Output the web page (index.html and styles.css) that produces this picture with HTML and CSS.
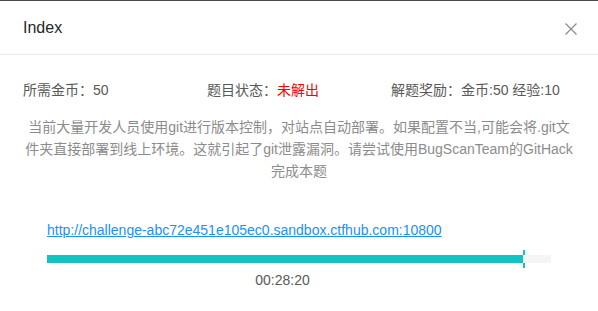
FILE: index.html
```html
<!DOCTYPE html>
<html lang="zh-CN">
<head>
    <meta charset="UTF-8">
    <meta name="viewport" content="width=device-width, initial-scale=1.0">
    <title>Index</title>
    <link rel="stylesheet" href="styles.css">
</head>
<body>
    <div class="modal">
        <!-- 标题栏 -->
        <div class="modal-header">
            <div class="modal-title">Index</div>
            <span class="modal-close">
                <svg width="12" height="12" viewBox="0 0 12 12">
                    <path d="M0.5 0.5 L11.5 11.5 M11.5 0.5 L0.5 11.5" stroke="#8c8c8c" stroke-width="1.3" fill="none"/>
                </svg>
            </span>
        </div>

        <div class="modal-body">
            <!-- 题目信息 -->
            <div class="info-row">
                <div>所需金币：50</div>
                <div>题目状态：<span class="unsolved">未解出</span></div>
                <div>解题奖励：金币:50 经验:10</div>
            </div>

            <p class="desc">当前大量开发人员使用git进行版本控制，对站点自动部署。如果配置不当,可能会将.git文件夹直接部署到线上环境。这就引起了git泄露漏洞。请尝试使用BugScanTeam的GitHack完成本题</p>

            <div class="env">
                <a class="env-link" href="#">http://challenge-abc72e451e105ec0.sandbox.ctfhub.com:10800</a>

                <div class="progress">
                    <div class="progress-fill" style="width: 94.44%"></div>
                    <div class="progress-mark" style="left: 94.44%"></div>
                </div>

                <div class="timer">00:28:20</div>
            </div>
        </div>
    </div>
</body>
</html>
```

FILE: styles.css
```css
body {
    margin: 0;
    background-color: #fff;
    font-family: "Liberation Sans", "Noto Sans CJK SC", sans-serif;
    font-size: 14px;
    line-height: 22px;
    color: #595959;
}

/* 弹窗 */
.modal {
    border-top: 1px solid #4a4a4a;
    background-color: #fff;
}

.modal-header {
    display: flex;
    align-items: center;
    justify-content: space-between;
    height: 53px;
    padding: 0 21px 0 23px;
    border-bottom: 1px solid #e8e8e8;
}

.modal-title {
    font-size: 16px;
    color: #262626;
}

.modal-close {
    display: flex;
    width: 12px;
    height: 12px;
    margin-top: 2px;
    cursor: pointer;
}

.modal-body {
    padding: 24px 23px;
}

/* 信息栏 */
.info-row {
    display: grid;
    grid-template-columns: 1fr 1fr 1fr;
    color: #595959;
}

.unsolved {
    color: #f00;
}

.desc {
    margin: 15px 0 0;
    text-align: center;
    color: #8c8c8c;
}

/* 环境地址和倒计时 */
.env {
    margin-top: 37px;
    padding: 0 24px;
}

.env-link {
    color: #1890ff;
    text-decoration: underline;
}

.progress {
    position: relative;
    height: 8px;
    margin-top: 14px;
    background-color: #f5f5f5;
}

.progress-fill {
    height: 8px;
    background-color: #13c2c2;
}

.progress-mark {
    position: absolute;
    top: -5px;
    width: 2px;
    height: 8px;
    border-top: 5px solid #13c2c2;
    border-bottom: 5px solid #13c2c2;
    background-color: #f5f5f5;
}

.timer {
    width: 471px;
    margin-top: 6px;
    text-align: center;
    color: #595959;
}
```
